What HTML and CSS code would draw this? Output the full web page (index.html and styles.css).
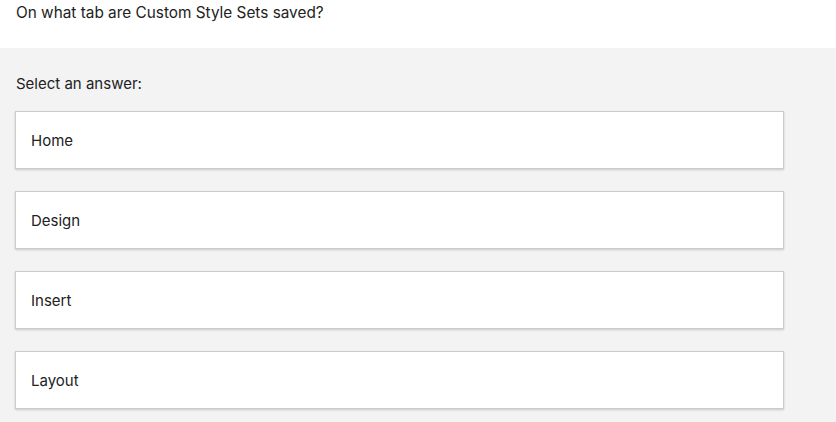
FILE: index.html
```html
<!DOCTYPE html>
<html>
<head>
<meta charset="utf-8">
<link rel="stylesheet" href="styles.css">
</head>
<body>
<div class="question">On what tab are Custom Style Sets saved?</div>
<div class="answers">
  <div class="prompt">Select an answer:</div>
  <div class="option">Home</div>
  <div class="option">Design</div>
  <div class="option">Insert</div>
  <div class="option">Layout</div>
</div>
</body>
</html>
```
FILE: styles.css
```css
html, body {
  margin: 0;
  padding: 0;
  background: #f3f3f3;
  font-family: Inter, "Noto Sans", sans-serif;
  font-size: 15px;
  color: #222;
}
.question {
  background: #fff;
  height: 48px;
  box-sizing: border-box;
  padding: 4px 16px 0;
  line-height: 18px;
  font-size: 15.35px;
}
.answers {
  padding: 26px 52px 0 15px;
}
.prompt {
  padding-left: 1px;
  line-height: 20px;
  margin-bottom: 17px;
}
.option {
  background: #fff;
  border: 1px solid #cccccc;
  box-shadow: 0 1px 2px rgba(0,0,0,0.18);
  height: 55px;
  box-sizing: content-box;
  display: flex;
  align-items: center;
  padding: 1px 15px 0;
  margin-bottom: 22px;
}
```
